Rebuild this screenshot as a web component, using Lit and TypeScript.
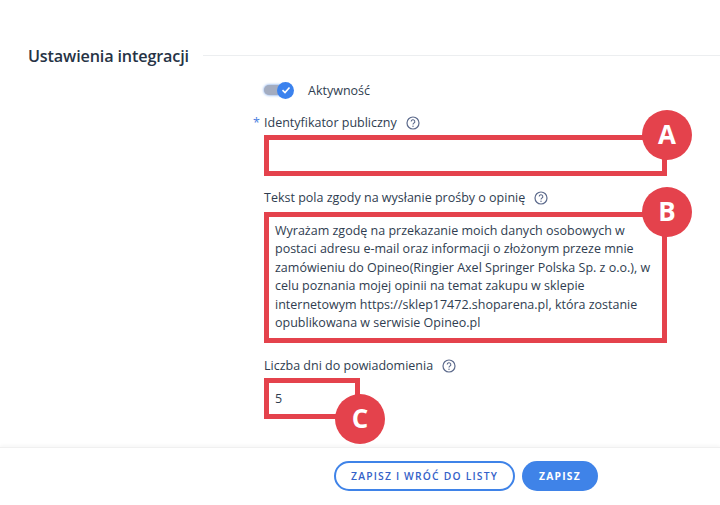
import { LitElement, html, css } from "lit";
import { customElement } from "lit/decorators.js";

const help = html`<svg class="help" width="14" height="14" viewBox="0 0 14 14" fill="none">
  <circle cx="7" cy="7" r="6" stroke="#5c6a8c" stroke-width="1.2"></circle>
  <path d="M5.2 5.6a1.8 1.8 0 1 1 2.7 1.5c-.6.4-.9.7-.9 1.3" stroke="#5c6a8c" stroke-width="1.1" fill="none"></path>
  <circle cx="7" cy="10.2" r=".7" fill="#5c6a8c"></circle>
</svg>`;

@customElement("app-root")
export class AppRoot extends LitElement {
  static styles = css`
    :host { display: block; width: 720px; height: 505px; background: #fff; overflow: hidden;
      font-family: "Open Sans", "Noto Sans", sans-serif; color: #2f3d50; font-size: 12.5px; }
    .page { height: 505px; display: flex; flex-direction: column; }
    .main { flex: 1; padding-top: 46px; }
    .head { display: flex; align-items: center; gap: 14px; padding-left: 28px; height: 20px; }
    .head h2 { margin: 0; font-size: 16.2px; line-height: 20px; font-weight: 600; color: #263345; letter-spacing: -0.15px; white-space: nowrap; }
    .head i { flex: 1; height: 1px; background: #eceef0; margin-top: -2px; }
    .form { margin-left: 264px; width: 403px; display: flex; flex-direction: column; }
    .toggle-row { display: flex; align-items: center; gap: 14px; height: 18px; margin-top: 15px; }
    .toggle { position: relative; width: 30px; height: 17px; }
    .track { position: absolute; left: 0; top: 3px; width: 26px; height: 10px; border-radius: 5px; background: #a3acc0; box-shadow: 0 0 3px #5a8fe0; }
    .knob { position: absolute; right: 0; top: 0; width: 17px; height: 17px; border-radius: 50%; background: #3b82ee; display: flex; align-items: center; justify-content: center; }
    label { display: flex; align-items: center; gap: 9px; height: 18px; line-height: 18px; white-space: nowrap; position: relative; }
    .star { position: absolute; left: -11px; top: 0; color: #4a7ee0; }
    .first { margin-top: 15px; }
    .box { position: relative; box-sizing: border-box; border: 5px solid #e4424c; width: 403px; }
    .a { height: 41px; margin-top: 3px; }
    .b { height: 131px; margin-top: 5px; padding: 5px 6px; line-height: 18.4px; }
    .c { height: 41px; width: 96px; margin-top: 3px; padding: 0 6px; display: flex; align-items: center; }
    .lb { margin-top: 13px; }
    .lc { margin-top: 14px; }
    .pin { position: absolute; box-sizing: border-box; width: 50px; height: 50px; padding-bottom: 2px; border-radius: 50%; background: #e4424c; color: #fff; font-size: 26px; font-weight: 700; display: flex; align-items: center; justify-content: center; z-index: 1; }
    .pa { right: -30px; top: -30px; }
    .pb { right: -30px; top: -30px; }
    .pc { right: -30px; bottom: -30px; }
    footer { box-sizing: border-box; height: 58px; border-top: 1px solid #f0f0f0; box-shadow: 0 -2px 3px rgba(0,0,0,.03); display: flex; align-items: flex-start; gap: 7px; padding: 13px 0 0 334px; }
    button { height: 30px; border-radius: 15px; font: 600 10.3px "Open Sans", sans-serif; letter-spacing: 1.2px; padding: 0; }
    .ghost { width: 181px; background: #fff; border: 2px solid #3f83e8; color: #3461c8; }
    .solid { width: 76px; background: #3f83e8; border: 0; color: #fff; font-weight: 700; }
  `;

  render() {
    return html`<div class="page">
      <div class="main">
        <div class="head"><h2>Ustawienia integracji</h2><i></i></div>
        <div class="form">
          <div class="toggle-row">
            <div class="toggle"><span class="track"></span><span class="knob">
              <svg width="10" height="10" viewBox="0 0 10 10" fill="none"><path d="M1.5 5.2 4 7.5l4.5-5" stroke="#fff" stroke-width="1.6"></path></svg>
            </span></div>
            <span>Aktywność</span>
          </div>
          <label class="first"><span class="star">*</span>Identyfikator publiczny ${help}</label>
          <div class="box a"><span class="pin pa">A</span></div>
          <label class="lb">Tekst pola zgody na wysłanie prośby o opinię ${help}</label>
          <div class="box b"><span class="pin pb">B</span>Wyrażam zgodę na przekazanie moich danych osobowych w<br>postaci adresu e-mail oraz informacji o złożonym przeze mnie<br>zamówieniu do Opineo(Ringier Axel Springer Polska Sp. z o.o.), w<br>celu poznania mojej opinii na temat zakupu w sklepie<br>internetowym https://sklep17472.shoparena.pl, która zostanie<br>opublikowana w serwisie Opineo.pl</div>
          <label class="lc">Liczba dni do powiadomienia ${help}</label>
          <div class="box c">5<span class="pin pc">C</span></div>
        </div>
      </div>
      <footer>
        <button class="ghost">ZAPISZ I WRÓĆ DO LISTY</button>
        <button class="solid">ZAPISZ</button>
      </footer>
    </div>`;
  }
}
